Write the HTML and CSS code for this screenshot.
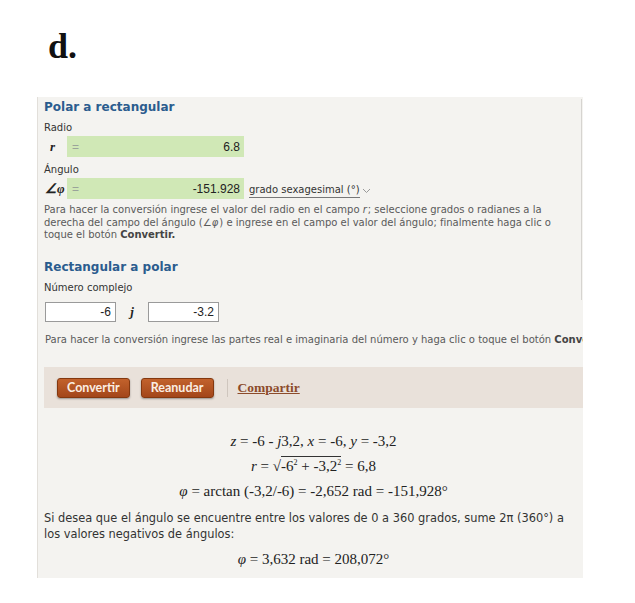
FILE: index.html
```html
<!DOCTYPE html>
<html lang="es">
<head>
<meta charset="utf-8">
<title>Polar a rectangular</title>
<link rel="stylesheet" href="styles.css">
</head>
<body>
<div class="page">
  <h1 class="title">d.</h1>
  <div class="panel">
    <div class="form">
      <h2 class="sec-title">Polar a rectangular</h2>
      <div class="label">Radio</div>
      <div class="row">
        <span class="sym">r</span>
        <div class="field green"><span class="eq">=</span><span class="val">6.8</span></div>
      </div>
      <div class="label">Ángulo</div>
      <div class="row">
        <span class="sym ang">∠φ</span>
        <div class="field green"><span class="eq">=</span><span class="val">-151.928</span></div>
        <span class="select">grado sexagesimal (°)</span>
        <svg class="chev" width="9" height="6" viewBox="0 0 9 6"><path d="M1 1 L4.5 4.5 L8 1" fill="none" stroke="#999" stroke-width="1"/></svg>
      </div>
      <p class="hint">Para hacer la conversión ingrese el valor del radio en el campo <i>r</i>; seleccione grados o radianes a la derecha del campo del ángulo (<i>∠φ</i>) e ingrese en el campo el valor del ángulo; finalmente haga clic o toque el botón <b>Convertir.</b></p>
      <h2 class="sec-title second">Rectangular a polar</h2>
      <div class="label">Número complejo</div>
    </div>
    <div class="row cplx">
      <div class="field white">-6</div>
      <span class="j">j</span>
      <div class="field white">-3.2</div>
    </div>
    <p class="hint nowrap">Para hacer la conversión ingrese las partes real e imaginaria del número y haga clic o toque el botón <b>Convertir.</b></p>
    <div class="actions">
      <span class="btn">Convertir</span>
      <span class="btn">Reanudar</span>
      <span class="sep"></span>
      <span class="share">Compartir</span>
    </div>
    <div class="results">
      <div class="eqline"><i>z</i> = -6 - <i>j</i>3,2, <i>x</i> = -6, <i>y</i> = -3,2</div>
      <div class="eqline"><i>r</i> = √<span class="rad">-6<sup>2</sup> + -3,2<sup>2</sup></span> = 6,8</div>
      <div class="eqline"><i>φ</i> = arctan (-3,2/-6) = -2,652 rad = -151,928°</div>
      <p class="note">Si desea que el ángulo se encuentre entre los valores de 0 a 360 grados, sume 2π (360°) a los valores negativos de ángulos:</p>
      <div class="eqline"><i>φ</i> = 3,632 rad = 208,072°</div>
    </div>
  </div>
</div>
</body>
</html>
```

FILE: styles.css
```css
html, body {
  margin: 0;
  padding: 0;
  background: #ffffff;
}

.page {
  padding-top: 28px;
}

.title {
  margin: 0 0 33px 48px;
  font-family: "Liberation Serif", serif;
  font-weight: bold;
  font-size: 36px;
  line-height: 36px;
  color: #111;
}

.panel {
  margin-left: 37px;
  width: 546px;
  height: 481px;
  overflow: hidden;
  background: #f4f3f0;
  border-left: 1px solid #e2dfda;
  box-sizing: border-box;
  padding-top: 2px;
  font-family: "DejaVu Sans", Verdana, sans-serif;
  color: #333;
}

.form {
  padding-left: 6px;
  margin-right: 1px;
  border-right: 1px solid #d6d4d0;
  padding-bottom: 5px;
}

.sec-title {
  margin: 0;
  font-size: 12px;
  line-height: 16px;
  font-weight: bold;
  color: #2b5c8e;
}

.sec-title.second {
  margin-top: 17px;
}

.label {
  font-size: 10px;
  line-height: 14px;
  margin-top: 6px;
  color: #333;
}

.row {
  display: flex;
  align-items: center;
  margin-top: 1px;
}

.sym {
  width: 23px;
  flex: none;
  padding-left: 6px;
  box-sizing: border-box;
  font-family: "Liberation Serif", serif;
  font-style: italic;
  font-weight: bold;
  font-size: 13px;
  color: #222;
  white-space: nowrap;
}

.sym.ang {
  padding-left: 1px;
}

.field {
  height: 21px;
  box-sizing: border-box;
  display: flex;
  align-items: center;
  font-family: "Liberation Sans", Arial, sans-serif;
  font-size: 12px;
  color: #222;
}

.field.green {
  width: 177px;
  background: #d0e8b6;
  padding: 0 4px 0 5px;
}

.eq {
  color: #9aa39a;
  font-size: 12px;
}

.val {
  margin-left: auto;
}

.select {
  margin-left: 5px;
  font-size: 10px;
  line-height: 14px;
  color: #333;
  border-bottom: 1px solid #777;
  padding-top: 4px;
}

.chev {
  margin-left: 2px;
  margin-top: 4px;
}

.hint {
  margin: 5px 0 0 0;
  max-width: 514px;
  font-size: 10px;
  line-height: 12.5px;
  color: #5a5a5a;
}

.hint i {
  font-family: "DejaVu Sans", sans-serif;
  padding-right: 1px;
}

.hint b {
  color: #444;
}

.hint.nowrap {
  white-space: nowrap;
  max-width: none;
  margin-left: 7px;
  margin-top: 12px;
}

.cplx {
  margin-left: 7px;
  margin-top: 2px;
}

.field.white {
  width: 71px;
  height: 20px;
  background: #fff;
  border: 1px solid #9a9a9a;
  justify-content: flex-end;
  padding-right: 4px;
}

.j {
  width: 32px;
  text-align: center;
  font-family: "Liberation Serif", serif;
  font-style: italic;
  font-weight: bold;
  font-size: 13px;
  color: #222;
}

.actions {
  margin: 21px 0 0 6px;
  height: 41px;
  background: #e9e1da;
  display: flex;
  align-items: center;
  padding-left: 13px;
}

.btn {
  height: 20px;
  box-sizing: border-box;
  padding: 0 9px;
  display: flex;
  align-items: center;
  border-radius: 3px;
  background: linear-gradient(#c2622c, #a3461a);
  border: 1px solid #84380f;
  box-shadow: 0 1px 2px rgba(0, 0, 0, 0.35);
  font-family: "Lato", "Open Sans", sans-serif;
  font-weight: bold;
  font-size: 12.5px;
  color: #fbeee3;
  margin-right: 11px;
}

.sep {
  width: 1px;
  height: 18px;
  background: #cfc6be;
  margin-left: 2px;
  margin-right: 10px;
}

.share {
  font-family: "Liberation Serif", serif;
  font-weight: bold;
  font-size: 13.5px;
  color: #8c4b2b;
  text-decoration: underline;
}

.results {
  padding: 21px 0 0 6px;
  font-family: "Liberation Serif", serif;
  color: #222;
}

.eqline {
  text-align: center;
  font-size: 15px;
  line-height: 25px;
}

.eqline sup {
  font-size: 8px;
  line-height: 0;
}

.rad {
  border-top: 1px solid #333;
  padding-top: 1px;
}

.note {
  margin: 6px 0 5px 0;
  font-family: "DejaVu Sans", Verdana, sans-serif;
  font-size: 11.4px;
  line-height: 16px;
  color: #333;
  max-width: 530px;
}
```
